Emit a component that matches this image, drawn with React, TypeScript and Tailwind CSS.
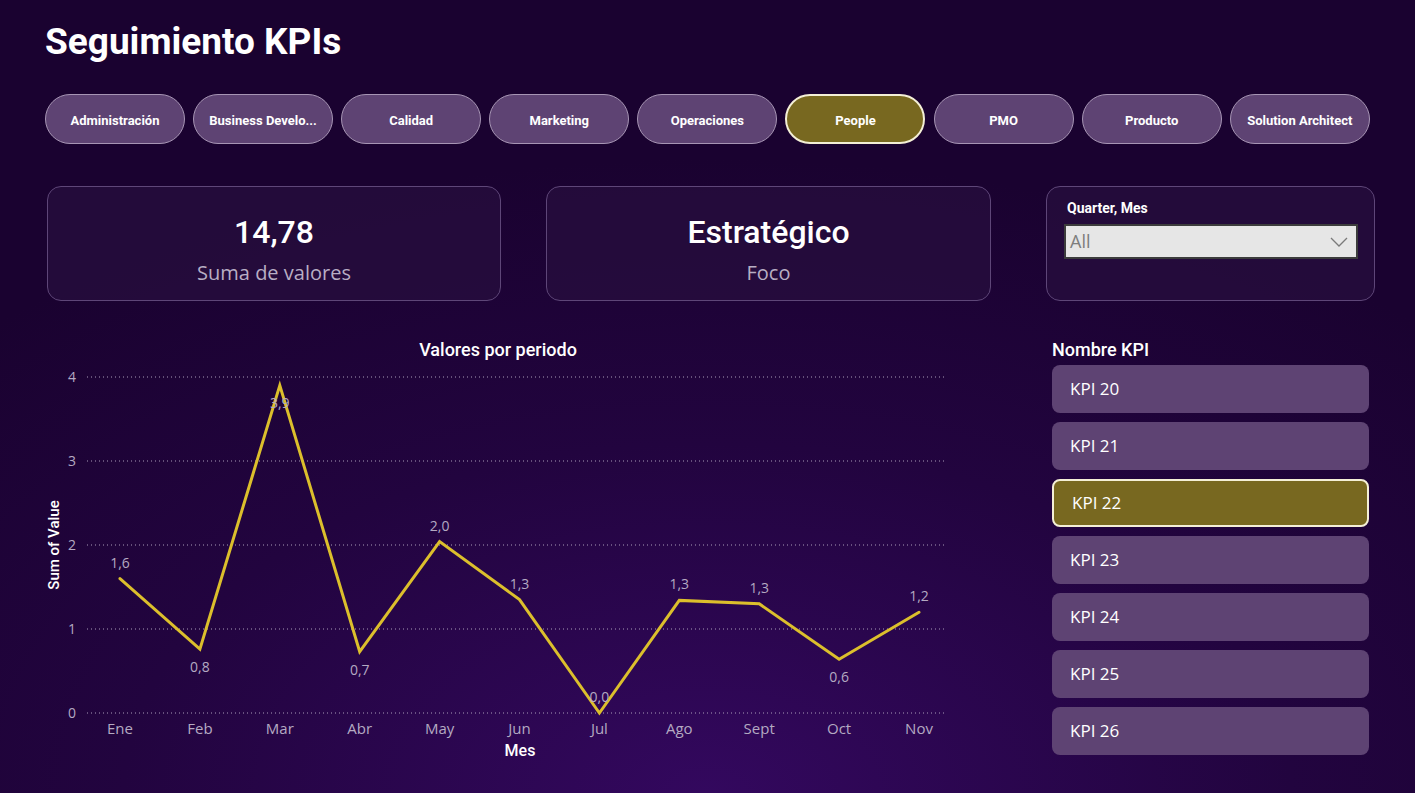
import React from 'react';

const areas = [
  'Administración',
  'Business Develo...',
  'Calidad',
  'Marketing',
  'Operaciones',
  'People',
  'PMO',
  'Producto',
  'Solution Architect',
];

const kpis = ['KPI 20', 'KPI 21', 'KPI 22', 'KPI 23', 'KPI 24', 'KPI 25', 'KPI 26'];

// month, value, label, label below the point?
const points: { m: string; v: number; l: string; below?: boolean }[] = [
  { m: 'Ene', v: 1.6, l: '1,6' },
  { m: 'Feb', v: 0.76, l: '0,8', below: true },
  { m: 'Mar', v: 3.9, l: '3,9', below: true },
  { m: 'Abr', v: 0.73, l: '0,7', below: true },
  { m: 'May', v: 2.04, l: '2,0' },
  { m: 'Jun', v: 1.35, l: '1,3' },
  { m: 'Jul', v: 0, l: '0,0' },
  { m: 'Ago', v: 1.34, l: '1,3' },
  { m: 'Sept', v: 1.3, l: '1,3' },
  { m: 'Oct', v: 0.64, l: '0,6', below: true },
  { m: 'Nov', v: 1.2, l: '1,2' },
];

const DIN = "font-['Roboto','Liberation_Sans',sans-serif]";
const SEGOE = "font-['Open_Sans','Noto_Sans',sans-serif]";

function LineChart() {
  const x0 = 120;
  const step = 79.9;
  const yZero = 713;
  const unit = 84;
  const xy = points.map((p, i) => [x0 + i * step, yZero - p.v * unit]);
  const path = xy.map(([x, y], i) => `${i ? 'L' : 'M'}${x.toFixed(1)} ${y.toFixed(1)}`).join(' ');

  return (
    <svg width={920} height={435} viewBox="40 335 920 435" className="block shrink-0">
      <text x={498} y={356} textAnchor="middle" fill="#ffffff" fontSize={18} fontWeight={500} className={DIN}>
        Valores por periodo
      </text>
      {[0, 1, 2, 3, 4].map((t) => (
        <g key={t}>
          <line
            x1={87}
            x2={947}
            y1={yZero - t * unit}
            y2={yZero - t * unit}
            stroke="#a99cb8"
            strokeWidth={1}
            strokeDasharray="1 3"
          />
          <text x={76} y={yZero - t * unit + 5} textAnchor="end" fill="#b4aac2" fontSize={14} className={SEGOE}>
            {t}
          </text>
        </g>
      ))}
      <text
        x={0}
        y={0}
        transform="translate(59 545) rotate(-90)"
        textAnchor="middle"
        fill="#ffffff"
        fontSize={15}
        fontWeight={500}
        className={DIN}
      >
        Sum of Value
      </text>
      {points.map((p, i) => (
        <text key={p.m} x={x0 + i * step} y={734} textAnchor="middle" fill="#b4aac2" fontSize={15} className={SEGOE}>
          {p.m}
        </text>
      ))}
      <text x={520} y={756} textAnchor="middle" fill="#ffffff" fontSize={16} fontWeight={500} className={DIN}>
        Mes
      </text>
      <path d={path} fill="none" stroke="#dcbf2c" strokeWidth={3} strokeLinecap="round" />
      {points.map((p, i) => {
        const [x, y] = xy[i];
        return (
          <text
            key={p.m + 'l'}
            x={x}
            y={p.below ? y + 23 : y - 11}
            textAnchor="middle"
            fill="#b4aac2"
            fontSize={14}
            className={SEGOE}
          >
            {p.l}
          </text>
        );
      })}
    </svg>
  );
}

function StatCard({ value, label, width, className = '' }: { value: string; label: string; width: string; className?: string }) {
  return (
    <div
      className={`${width} ${className} h-[115px] rounded-[14px] border border-[#5e4678] bg-[#28103f]/70 flex flex-col items-center pt-[27px]`}
    >
      <div className="text-[32px] leading-[36px] font-medium">{value}</div>
      <div className={`${SEGOE} text-[20px] leading-[26px] mt-[10px] text-[#b8aec4]`}>{label}</div>
    </div>
  );
}

export default function App() {
  return (
    <div
      className={`${DIN} w-[1415px] h-[793px] overflow-hidden text-white bg-[radial-gradient(ellipse_75%_80%_at_50%_100%,#33085e_0%,#22043f_55%,#1a0230_100%)]`}
    >
      <h1 className="pl-[45px] pt-[20px] text-[37px] leading-[44px] font-bold">Seguimiento KPIs</h1>

      {/* area buttons */}
      <div className="flex gap-[8.1px] pl-[45px] mt-[30px]">
        {areas.map((a) => {
          const active = a === 'People';
          return (
            <div
              key={a}
              className={`w-[140px] h-[50px] shrink-0 rounded-full flex items-center justify-center pt-[3px] text-[13px] font-bold ${
                active ? 'bg-[#786820] border-2 border-[#f4efd6]' : 'bg-[#5e4373] border border-[#a795b4]'
              }`}
            >
              {a}
            </div>
          );
        })}
      </div>

      {/* cards */}
      <div className="flex mt-[42px] pl-[47px]">
        <StatCard value="14,78" label="Suma de valores" width="w-[454px]" />
        <StatCard value="Estratégico" label="Foco" width="w-[445px]" className="ml-[45px]" />
        <div className="w-[329px] h-[115px] ml-[55px] rounded-[14px] border border-[#5e4678] bg-[#28103f]/70 pl-[17px] pt-[12px]">
          <div className="text-[14px] leading-[18px] font-bold pl-[3px]">Quarter, Mes</div>
          <div className="mt-[7px] w-[294px] h-[35px] bg-[#e6e6e6] border-2 border-[#3c3c3c] flex items-center justify-between pl-[4px] pr-[8px]">
            <span className={`${SEGOE} text-[18px] text-[#7d7d7d]`}>All</span>
            <svg width="18" height="10" viewBox="0 0 18 10">
              <path d="M1 1 L9 9 L17 1" fill="none" stroke="#7a7a7a" strokeWidth="1.3" />
            </svg>
          </div>
        </div>
      </div>

      {/* chart + list */}
      <div className="flex mt-[34px] pl-[40px]">
        <LineChart />
        <div className="ml-[92px] w-[317px] pt-[2px]">
          <div className="text-[18px] leading-[26px] font-medium">Nombre KPI</div>
          <div className="flex flex-col gap-[9px] mt-[2px]">
            {kpis.map((k) => {
              const active = k === 'KPI 22';
              return (
                <div
                  key={k}
                  className={`${SEGOE} h-[48px] rounded-[8px] flex items-center pl-[18px] text-[17px] ${
                    active ? 'bg-[#786820] border-2 border-[#f4efd6]' : 'bg-[#5e4373]'
                  }`}
                >
                  {k}
                </div>
              );
            })}
          </div>
        </div>
      </div>
    </div>
  );
}
